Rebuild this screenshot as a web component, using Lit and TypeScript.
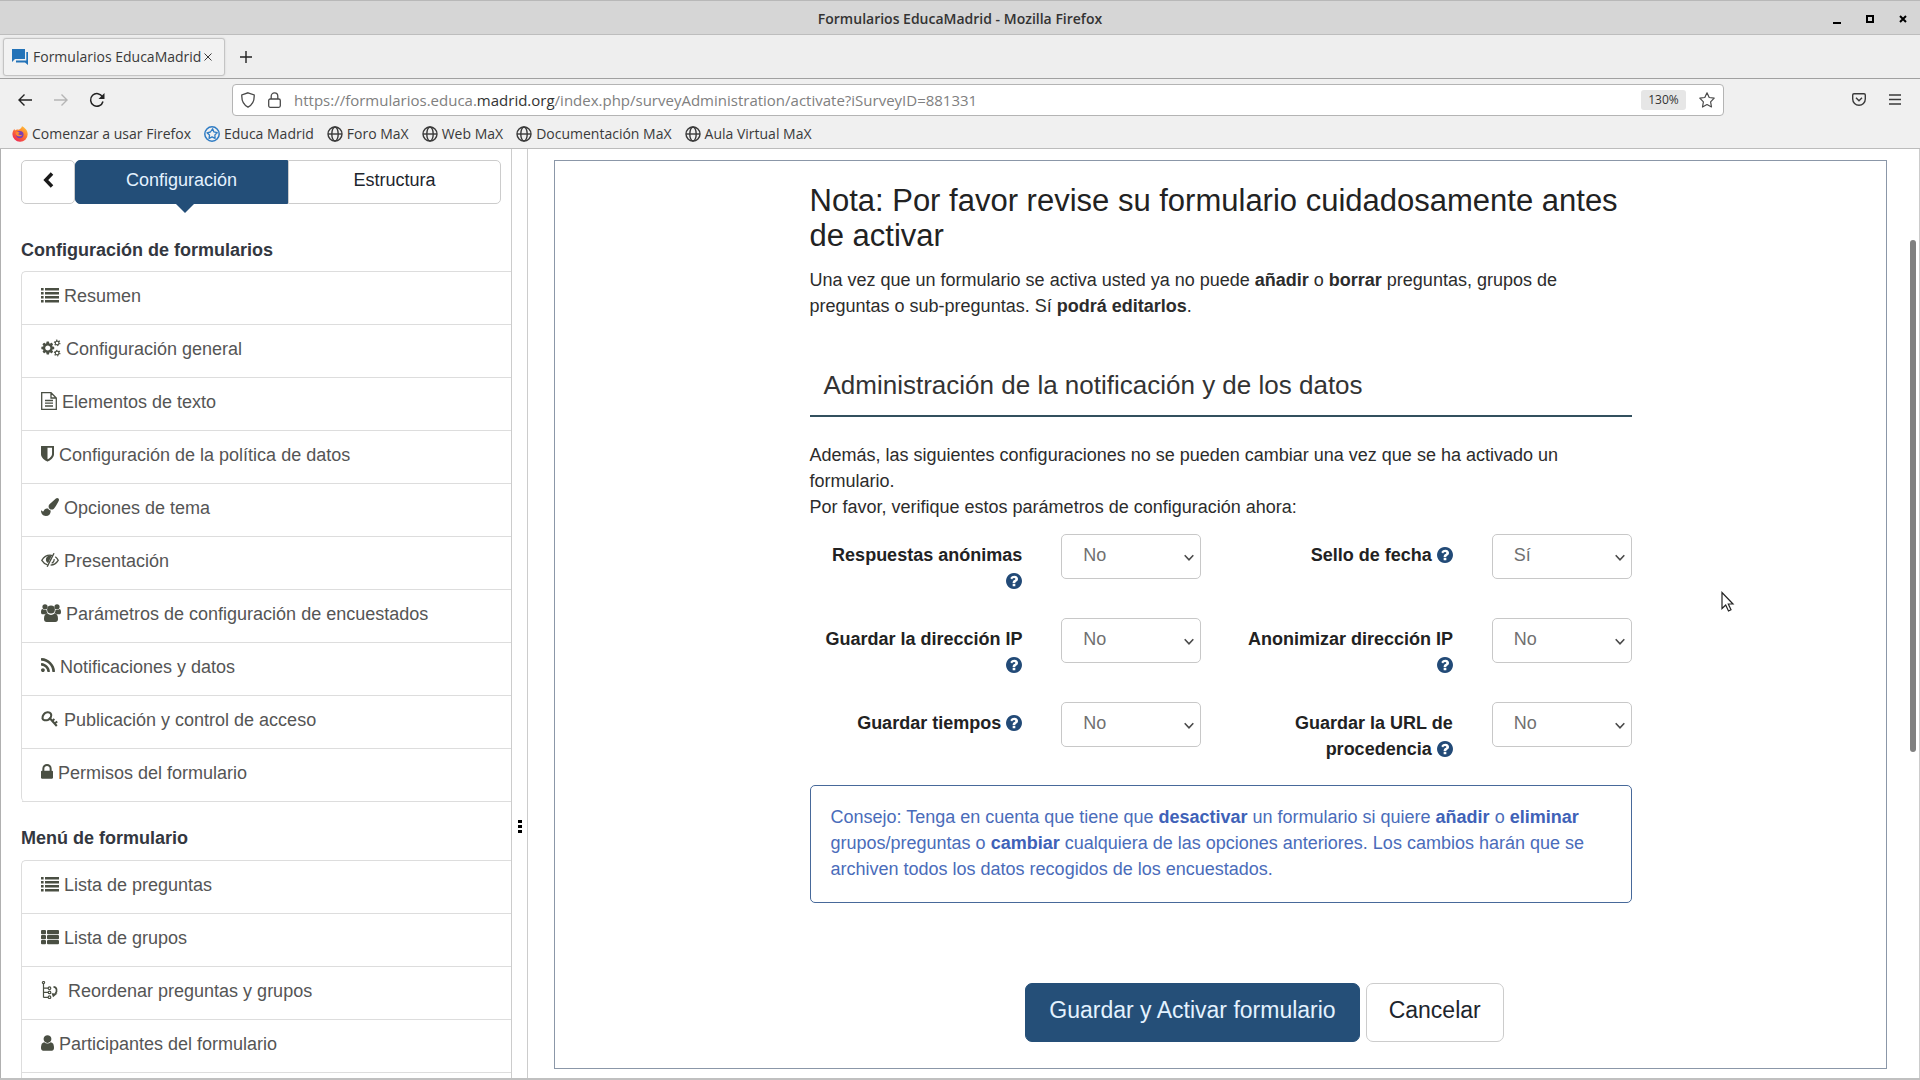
import { LitElement, html, css, svg } from "lit";
import { customElement } from "lit/decorators.js";

const fa = (w: number, box: string, body: unknown) =>
  html`<svg class="ico" width=${w} height="18" viewBox=${box} fill="currentColor" aria-hidden="true">${body}</svg>`;

const icons: Record<string, () => unknown> = {
  list: () => fa(18, "0 0 18 18", svg`<path d="M0 2h2.600v2.600H0zM0 6h2.600v2.600H0zM0 10h2.600v2.600H0zM0 14h2.600v2.600H0zM4 2h14v2.600H4zM4 6h14v2.600H4zM4 10h14v2.600H4zM4 14h14v2.600H4z"/>`),
  groups: () => fa(18, "0 0 18 18", svg`<rect x="0" y="2" width="5" height="4.200" rx="1"/><rect x="0" y="7" width="5" height="4.200" rx="1"/><rect x="0" y="12" width="5" height="4.200" rx="1"/><rect x="6" y="2" width="12" height="4.200" rx="1"/><rect x="6" y="7" width="12" height="4.200" rx="1"/><rect x="6" y="12" width="12" height="4.200" rx="1"/>`),
  cogs: () => fa(20, "0 0 1920 1792", svg`<path fill-rule="evenodd" d="M896 896q0-106-75-181t-181-75-181 75-75 181 75 181 181 75 181-75 75-181zm384-91v185q0 10-7 19.500t-16 10.500l-155 24q-11 35-32 76 34 48 90 115 7 11 7 20 0 12-7 19-23 30-82.500 89.500t-78.500 59.500q-11 0-21-7l-115-90q-37 19-77 31-11 108-23 155-7 24-30 24h-186q-11 0-20-7.500t-10-17.500l-23-153q-34-10-75-31l-118 89q-7 7-20 7-11 0-21-8-144-133-144-160 0-9 7-19 10-14 41-53t47-61q-23-44-35-82l-152-24q-10-1-17-9.500t-7-19.500v-185q0-10 7-19.500t16-10.500l155-24q11-35 32-76-34-48-90-115-7-11-7-20 0-12 7-20 22-30 82-89t79-59q11 0 21 7l115 90q34-18 77-32 11-108 23-154 7-24 30-24h186q11 0 20 7.500t10 17.500l23 153q34 10 75 31l118-89q8-7 20-7 11 0 21 8 144 133 144 160 0 8-7 19-12 16-42 54t-45 60q23 48 34 82l152 23q10 2 17 10.500t7 19.500z"/><g fill="none" stroke="currentColor"><circle cx="1570" cy="390" r="185" stroke-width="120"/><circle cx="1570" cy="390" r="275" stroke-width="110" stroke-dasharray="130 158"/><circle cx="1570" cy="1400" r="185" stroke-width="120"/><circle cx="1570" cy="1400" r="275" stroke-width="110" stroke-dasharray="130 158"/></g>`),
  file: () => fa(16, "0 0 16 18", svg`<path fill="none" stroke="currentColor" stroke-width="1.300" d="M.7.7h9.300l5.300 5.300v11.300H.7zM10 .7V6h5.300M4 8.500h8M4 11.200h8M4 14h8"/>`),
  shield: () => fa(13, "256 64 1280 1728", svg`<path d="M1344 960v-640h-448v1137q119-63 213-137 235-184 235-360zm192-768v768q0 86-33.500 170.500t-83 150-118 127.500-126.500 103-121 77.500-89.500 49.500-42.500 20q-12 6-26 6t-26-6q-16-7-42.500-20t-89.500-49.500-121-77.500-126.500-103-118-127.500-83-150-33.500-170.500v-768q0-26 19-45t45-19h1152q26 0 45 19t19 45z"/>`),
  brush: () => fa(18, "0 0 1792 1792", svg`<path d="M1615 0q70 0 122.500 46.500t52.500 116.500q0 63-45 151-332 629-465 752-97 91-218 91-126 0-216.500-92.500t-90.500-219.500q0-128 92-212l638-579q59-54 130-54zm-909 1034q39 76 106.500 130t150.500 76l1 71q4 213-129.500 347t-348.500 134q-123 0-218-46.500t-152.500-127.500-86.500-183-29-220q7 5 41 30t62 44.500 59 36.500 46 17q41 0 55-37 25-66 57.500-112.500t69.500-76 88-47.500 103-25.500 125-10.500z"/>`),
  eye: () => fa(18, "0 0 18 18", svg`<g fill="none" stroke="currentColor"><path stroke-width="1.300" d="M6.600 13.900C4.200 13.200 2.200 11.600.8 9.300 2.900 5.800 5.600 4.200 9 4.200c.9 0 1.700.1 2.500.4M14.300 5.800c1.200.9 2.200 2 2.900 3.500-1.900 3.100-4.400 4.600-7.600 4.800"/><path stroke-width="1.400" d="M13 2.200 6.200 15.800"/><path stroke-width="1.100" d="M13.200 8c.1 2-.9 3.500-2.500 4.200"/></g><path d="M10.800 4.600 7.200 12C3.900 10.800 4 5.300 8.400 4.400z"/>`),
  users: () => fa(20, "0 0 20 18", svg`<circle cx="4" cy="2.800" r="2.600"/><circle cx="16" cy="2.800" r="2.600"/><circle cx="10" cy="5.500" r="3.900"/><path d="M0 8c0-2 .7-3 1.500-3 1.200 1 2.600 1.300 4 .8C5.400 7.200 5.900 8.300 6.700 9.200 5.400 9.300 4.600 9.700 4 10.300H1.600C.6 10.300 0 9.500 0 8zM20 8c0-2-.7-3-1.500-3-1.200 1-2.600 1.300-4 .8.1 1.400-.4 2.500-1.200 3.400 1.300.1 2.100.5 2.700 1.100h2.400c1 0 1.600-.8 1.600-2.300zM3 15c0-3.500 1.200-5.400 3.400-5.400 2.200 1.700 5 1.700 7.200 0 2.200 0 3.400 1.900 3.400 5.400 0 2-1 3-2.700 3H5.700C4 18 3 17 3 15z"/>`),
  rss: () => fa(14, "192 60 1410 1740", svg`<path d="M576 1344q0 80-56 136t-136 56-136-56-56-136 56-136 136-56 136 56 56 136zm512 123q2 28-17 48-18 21-47 21h-135q-25 0-43-16.500t-20-41.500q-22-229-184.500-391.500t-391.500-184.500q-25-2-41.500-20t-16.500-43v-135q0-29 21-47 17-17 43-17h5q160 13 306 80.500t259 181.500q114 113 181.500 259t80.500 306zm512 2q2 27-18 47-18 20-46 20h-143q-26 0-44.500-17.500t-19.500-42.500q-12-215-101-408.500t-231.500-336-336-231.500-408.500-102q-25-1-42.500-19.500t-17.500-43.500v-143q0-28 20-46 18-18 44-18h3q262 13 501.500 120t425.500 294q187 186 294 425.500t120 501.500z"/>`),
  key: () => fa(18, "0 0 18 18", svg`<g fill="none" stroke="currentColor"><path stroke-width="2.100" d="M2.700 4.400C4.500 1.800 8.400 1.500 9.800 3.600c1.300 2-.2 5.400-3 6.300C4.400 10.600 1.900 10.400 1.500 8.600 1.300 7.200 1.700 5.700 2.700 4.400z"/><path stroke-width="2.100" d="m8.400 7.800 7.400 8.200"/><path stroke-width="1.900" d="m13.600 13.600 2.600-2.200M11 11.200l2.400-2.200"/></g>`),
  lock: () => fa(12, "320 100 1152 1600", svg`<path d="M640 768h512v-192q0-106-75-181t-181-75-181 75-75 181v192zm832 96v576q0 40-28 68t-68 28h-960q-40 0-68-28t-28-68v-576q0-40 28-68t68-28h32v-192q0-184 132-316t316-132 316 132 132 316v192h32q40 0 68 28t28 68z"/>`),
  tree: () => fa(22, "0 0 22 18", svg`<g fill="none" stroke="currentColor" stroke-width="1.200"><circle cx="2.500" cy="1.600" r="1.100"/><path d="M2.500 3v13.400M2.500 7.200h4.600M2.500 11.400h4.600M2.500 16.400h4.600"/><circle cx="8.500" cy="7.200" r="1.300"/><circle cx="8.500" cy="11.400" r="1.300"/><circle cx="8.500" cy="16.200" r="1.300"/></g><path fill="none" stroke="currentColor" stroke-width="1.700" d="M12.500 5.800c3.200.2 4.200 4 1.800 7"/><path d="m10.500 12.200 6 .3-4.500 3.700z"/>`),
  user: () => fa(13, "256 100 1280 1600", svg`<path d="M1536 1399q0 109-62.500 187t-150.500 78h-854q-88 0-150.500-78t-62.500-187q0-85 8.500-160.500t31.500-152 58.500-131 94-89 134.500-34.500q131 128 313 128t313-128q76 0 134.500 34.500t94 89 58.500 131 31.500 152 8.500 160.500zm-256-887q0 159-112.500 271.500t-271.500 112.500-271.500-112.500-112.500-271.500 112.500-271.500 271.500-112.500 271.500 112.500 112.500 271.500z"/>`),
};

const globe = () => html`<svg width="16" height="16" viewBox="0 0 16 16" fill="none" stroke="#3a3a3a" stroke-width="1.400" aria-hidden="true"><circle cx="8" cy="8" r="7"/><ellipse cx="8" cy="8" rx="3.200" ry="7"/><path d="M1 8h14"/></svg>`;
const firefox = () => html`<svg width="16" height="16" viewBox="0 0 16 16" aria-hidden="true"><defs><linearGradient id="ff" x1="1" y1="0" x2="0.300" y2="1"><stop offset="0" stop-color="#ffd23c"/><stop offset=".5" stop-color="#ff7a2e"/><stop offset="1" stop-color="#ee2a55"/></linearGradient></defs><path fill="url(#ff)" d="M10 .3c2.800 1.500 5.700 4 5.700 8A7.600 7.600 0 0 1 8 15.800 7.600 7.600 0 0 1 .4 8.300c0-2.300.9-4 2-5.300l.6 1.500C4 3.600 5.500 3.400 6.500 3.700 8 3.300 9.500 2 10 .3z"/><circle cx="7.800" cy="8.600" r="3.700" fill="#7a3fb5"/><path fill="#ff8a30" d="M3.600 6.400c1.700-1 3.500-.4 4.300.5-1 .1-1.600.6-1.500 1.200.2 1.100 2.600 1.200 4 .3-.5 2.300-5 2.600-6.200.6-.4-.8-.6-1.700-.6-2.600z"/></svg>`;
const educa = () => html`<svg width="16" height="16" viewBox="0 0 16 16" fill="none" stroke="#2f7cc4" aria-hidden="true"><circle cx="8" cy="8" r="7.200" stroke-width="1.500"/><path stroke-width="1.300" stroke-linejoin="round" d="m8.600 2.800 1.300 3.100 3.300.8-2.300 2.200.2 3.500-3-1.500-3 1.500.4-3.300-2.500-2.300 3.400-.8z"/></svg>`;
const help = () => html`<svg class="help" width="16" height="16" viewBox="128 128 1536 1536" fill="#224a77" role="img" aria-label="Ayuda"><circle cx="896" cy="896" r="740" fill="#fff"/><path fill-rule="evenodd" d="M1024 1376v-192q0-14-9-23t-23-9h-192q-14 0-23 9t-9 23v192q0 14 9 23t23 9h192q14 0 23-9t9-23zm256-672q0-88-55.500-163t-138.500-116-170-41q-243 0-371 213-15 24 8 42l132 100q7 6 19 6 16 0 25-12 53-68 86-92 34-24 86-24 48 0 85.500 26t37.500 59q0 38-20 61t-68 45q-63 28-115.500 86.500t-52.500 125.500v36q0 14 9 23t23 9h192q14 0 23-9t9-23q0-19 21.500-49.500t54.500-49.500q32-18 49-28.500t46-35 44.500-48 28-60.500 12.500-81zm384 192q0 209-103 385.500t-279.500 279.500-385.500 103-385.500-103-279.500-279.500-103-385.500 103-385.500 279.500-279.500 385.500-103 385.500 103 279.500 279.500 103 385.500z"/></svg>`;

@customElement("browser-chrome")
class BrowserChrome extends LitElement {
  static styles = css`
    :host { display: block; background: #eee; color: #3a3a3a; font: 14px/20px "Open Sans", "Noto Sans", sans-serif; }
    button { border: 0; padding: 0; background: none; color: inherit; font: inherit; display: flex; align-items: center; justify-content: center; }
    svg { display: block; flex: none; }
    .title { display: grid; grid-template-columns: 1fr auto 1fr; align-items: center; background: #d6d6d6; border-top: 1px solid #b8b8b8; border-bottom: 1px solid #bdbdbd; box-sizing: border-box; height: 35px; padding-top: 2px; }
    .title h1 { grid-column: 2; margin: 0; font-size: 14px; line-height: 20px; font-weight: 600; color: #333; }
    .win { display: flex; justify-content: flex-end; gap: 18px; padding-right: 10px; color: #000; }
    .win button { width: 15px; height: 16px; }
    .tabs { display: flex; align-items: center; height: 43px; border-bottom: 1px solid #a0a0a0; padding-left: 3px; gap: 11px; }
    .tab { display: flex; align-items: center; box-sizing: border-box; width: 222px; height: 38px; padding: 1px 12px 0 8px; border: 1px solid #c4c4c4; border-radius: 3px; background: #f2f2f2; box-shadow: 0 0 2px #ccc; }
    .tab span { margin-left: 5px; flex: 1; white-space: nowrap; }
    .plus { width: 20px; height: 20px; }
    .nav { display: flex; align-items: center; height: 41px; padding: 0 19px 0 15px; background: #f0f0f0; }
    .nav .b { width: 20px; height: 20px; margin-right: 16px; }
    .url { flex: 1; display: flex; align-items: center; box-sizing: border-box; height: 32px; margin: 0 128px 0 109px; padding: 0 8px; border: 1px solid #b4b4b4; border-radius: 4px; background: #fff; gap: 13px; color: #808080; }
    .addr { flex: 1; font-size: 15px; }
    .addr b { font-weight: 400; color: #333; }
    .zoom { width: 45px; height: 20px; background: #e6e6e6; border-radius: 3px; font-size: 12px; color: #333; }
    .menu { display: flex; gap: 23px; }
    .marks { display: flex; align-items: center; height: 29px; box-sizing: border-box; padding: 0 0 1px 12px; gap: 13px; border-bottom: 1px solid #bcbcbc; background: #f0f0f0; }
    .marks a { display: flex; align-items: center; gap: 4px; color: inherit; text-decoration: none; }
  `;
  render() {
    return html`
      <header class="title">
        <h1>Formularios EducaMadrid - Mozilla Firefox</h1>
        <div class="win">
          <button aria-label="Minimizar"><svg width="8" height="10"><path d="M0 8h8v2H0z"/></svg></button>
          <button aria-label="Maximizar"><svg width="8" height="8" fill="none" stroke="#000" stroke-width="2"><path d="M1 1h6v6H1z"/></svg></button>
          <button aria-label="Cerrar"><svg width="8" height="8" stroke="#000" stroke-width="2"><path d="m1 1 6 6M7 1 1 7"/></svg></button>
        </div>
      </header>
      <div class="tabs">
        <div class="tab">
          <svg width="16" height="16" viewBox="0 0 16 16" fill="#2373b8"><path d="M0 0h13v10H3l-3 3zM14.300 3H16v13l-3-2.500H4v-2h10.300z"/></svg>
          <span>Formularios EducaMadrid</span>
          <button aria-label="Cerrar pestaña"><svg width="8" height="8" stroke="#3a3a3a"><path d="m.5.5 7 7M7.500.5l-7 7"/></svg></button>
        </div>
        <button class="plus" aria-label="Nueva pestaña"><svg width="12" height="12" stroke="#222" stroke-width="1.400"><path d="M6 0v12M0 6h12"/></svg></button>
      </div>
      <nav class="nav">
        <button class="b" aria-label="Atrás"><svg width="14" height="12" fill="none" stroke="#222" stroke-width="1.400"><path d="M14 6H1M6.500.5 1 6l5.500 5.500"/></svg></button>
        <button class="b" aria-label="Adelante"><svg width="14" height="12" fill="none" stroke="#b5b5b5" stroke-width="1.400"><path d="M0 6h13M7.500.5 13 6l-5.500 5.500"/></svg></button>
        <button class="b" aria-label="Recargar"><svg width="16" height="16" fill="none" stroke="#222" stroke-width="1.500"><path d="M13.500 5A6.300 6.300 0 1 0 14 9.500"/><path fill="#222" stroke="none" d="M15.500 1v6h-6z"/></svg></button>
        <div class="url">
          <svg width="14" height="16" fill="none" stroke="#4a4a4a" stroke-width="1.300"><path d="M7 .8 13.200 3c.3 6-1.700 10-6.200 12.200C2.500 13 .5 9 .8 3z"/></svg>
          <svg width="13" height="16" fill="none" stroke="#4a4a4a" stroke-width="1.300"><rect x=".7" y="7" width="11.600" height="8.300" rx="1.500"/><path d="M3.200 7V4.200a3.300 3.300 0 0 1 6.600 0V7"/></svg>
          <span class="addr">https://formularios.educa.<b>madrid.org</b>/index.php/surveyAdministration/activate?iSurveyID=881331</span>
          <button class="zoom">130%</button>
          <button aria-label="Añadir a marcadores"><svg width="16" height="16" fill="none" stroke="#4a4a4a" stroke-width="1.200" stroke-linejoin="round"><path d="m8 .8 2.200 4.700 5 .7-3.600 3.600.9 5.200L8 12.500 3.500 15l.9-5.200L.8 6.200l5-.7z"/></svg></button>
        </div>
        <div class="menu">
          <button aria-label="Pocket"><svg width="14" height="13" fill="none" stroke="#3a3a3a" stroke-width="1.400"><path d="M2 .7h10q1.300 0 1.300 1.300v4a6.300 6.300 0 0 1-12.600 0V2Q.7.7 2 .7zM4 4.700l3 3 3-3"/></svg></button>
          <button aria-label="Menú"><svg width="12" height="11" stroke="#3a3a3a" stroke-width="1.300"><path d="M0 1h12M0 5.500h12M0 10h12"/></svg></button>
        </div>
      </nav>
      <nav class="marks">
        <a href="#">${firefox()}Comenzar a usar Firefox</a>
        <a href="#">${educa()}Educa Madrid</a>
        ${["Foro MaX", "Web MaX", "Documentación MaX", "Aula Virtual MaX"].map((t) => html`<a href="#">${globe()}${t}</a>`)}
      </nav>`;
  }
}

@customElement("side-menu")
class SideMenu extends LitElement {
  static styles = css`
    :host { display: flex; flex-direction: column; min-height: 0; overflow: hidden; box-sizing: border-box; padding: 11px 0 0 20px; border-left: 1px solid #b0b0b0; }
    .switch { display: flex; flex: none; height: 44px; margin-right: 10px; }
    .switch button { box-sizing: border-box; font: 18px/26px "Liberation Sans", sans-serif; border: 1px solid #ccc; background: #fff; color: #1d252d; padding: 0 0 4px; }
    .back { width: 54px; border-radius: 5px; display: flex; align-items: center; justify-content: center; }
    .switch .on { flex: 1; position: relative; background: #234e78; border-color: #234e78; color: #e3f2ff; border-radius: 5px 0 0 5px; }
    .on::after { content: ""; position: absolute; left: calc(50% - 7px); top: 100%; border: 10px solid transparent; border-top-color: #234e78; border-bottom: 0; }
    .off { flex: 1; border-left: 0; border-radius: 0 5px 5px 0; }
    h2 { flex: none; margin: 0; font-size: 18px; line-height: 26px; font-weight: 700; color: #333740; padding: 33px 0 8px; }
    h2 + ul ~ h2 { padding: 23px 0 9px; }
    ul { flex: none; list-style: none; margin: 0; padding: 0; border: 1px solid #ddd; border-width: 1px 0 0 1px; border-radius: 5px 0 0 5px; }
    ul:last-child { flex: 1 0 auto; border-bottom-left-radius: 0; }
    li { border-bottom: 1px solid #ddd; }
    a { display: flex; align-items: center; gap: 5px; padding: 11px 0 15px 19px; color: #555; text-decoration: none; font-size: 18px; line-height: 26px; }
    svg.ico { flex: none; color: #4a4f43; display: block; margin-bottom: 2px; }
  `;
  top: [string, string][] = [
    ["list", "Resumen"], ["cogs", "Configuración general"], ["file", "Elementos de texto"],
    ["shield", "Configuración de la política de datos"], ["brush", "Opciones de tema"], ["eye", "Presentación"],
    ["users", "Parámetros de configuración de encuestados"], ["rss", "Notificaciones y datos"],
    ["key", "Publicación y control de acceso"], ["lock", "Permisos del formulario"],
  ];
  bottom: [string, string][] = [
    ["list", "Lista de preguntas"], ["groups", "Lista de grupos"],
    ["tree", "Reordenar preguntas y grupos"], ["user", "Participantes del formulario"],
  ];
  rows(items: [string, string][]) {
    return html`<ul>${items.map(([i, t]) => html`<li><a href="#">${icons[i]()}<span>${t}</span></a></li>`)}</ul>`;
  }
  render() {
    return html`
      <div class="switch">
        <button class="back" aria-label="Volver"><svg width="11" height="16" fill="none" stroke="#1a1a1a" stroke-width="3.500"><path d="M9 1.500 2.800 8 9 14.500"/></svg></button>
        <button class="on">Configuración</button>
        <button class="off">Estructura</button>
      </div>
      <h2>Configuración de formularios</h2>
      ${this.rows(this.top)}
      <h2>Menú de formulario</h2>
      ${this.rows(this.bottom)}`;
  }
}

@customElement("activate-panel")
class ActivatePanel extends LitElement {
  static styles = css`
    :host { display: block; box-sizing: border-box; padding: 22px 19px 0; border: 1px solid #8b97a8; color: #2c2c2c; font-size: 18px; line-height: 26px; }
    .col { box-sizing: border-box; width: 66.667%; margin: 0 auto; padding: 0 20px; }
    h2 { margin: 0 0 14px; font-size: 31px; line-height: 35px; font-weight: 400; color: #222; }
    h3 { margin: 48px 0 0; padding: 0 14px 12px; font-size: 26px; line-height: 36px; font-weight: 400; color: #333; border-bottom: 2px solid #33505e; }
    p { margin: 0; }
    .note { margin-top: 25px; }
    .grid { display: grid; grid-template-columns: 213fr 140fr 213fr 140fr; column-gap: 39px; row-gap: 24px; margin-top: 14px; }
    label { min-height: 52px; padding: 8px 0 0 5px; text-align: right; font-weight: 700; color: #222; }
    .help { vertical-align: -2px; }
    .pick { position: relative; }
    select { appearance: none; box-sizing: border-box; width: 100%; height: 45px; margin: 0; padding: 0 20px 4px 21px; border: 1px solid #c8c8c8; border-radius: 5px; background: #fff; color: #707070; font: 18px/26px "Liberation Sans", sans-serif; opacity: 1; }
    .pick svg { position: absolute; right: 7px; top: 20px; pointer-events: none; }
    .tip { margin-top: 23px; padding: 18px 20px 20px; border: 1px solid #47699a; border-radius: 5px; color: #4a6cba; }
    .tip b { color: #3f62b8; }
    .actions { display: flex; justify-content: center; gap: 6px; padding: 80px 0 26px 88px; }
    .actions button { box-sizing: border-box; height: 59px; padding: 0 22px 5px; border: 1px solid #ccc; border-radius: 7px; background: #fff; color: #1d252d; font: 23px/32px "Liberation Sans", sans-serif; }
    .actions .go { padding: 0 23px 5px; background: #254f78; border-color: #254f78; color: #e3f2ff; }
  `;
  fields: [string, string][] = [
    ["Respuestas anónimas", "No"], ["Sello de fecha", "Sí"], ["Guardar la dirección IP", "No"],
    ["Anonimizar dirección IP", "No"], ["Guardar tiempos", "No"], ["Guardar la URL de procedencia", "No"],
  ];
  render() {
    return html`
      <div class="col">
        <h2>Nota: Por favor revise su formulario cuidadosamente antes de activar</h2>
        <p>Una vez que un formulario se activa usted ya no puede <b>añadir</b> o <b>borrar</b> preguntas, grupos de preguntas o sub-preguntas. Sí <b>podrá editarlos</b>.</p>
        <h3>Administración de la notificación y de los datos</h3>
        <p class="note">Además, las siguientes configuraciones no se pueden cambiar una vez que se ha activado un formulario.<br>Por favor, verifique estos parámetros de configuración ahora:</p>
        <div class="grid">
          ${this.fields.map(([t, v], i) => html`
            <label for="f${i}">${t} ${help()}</label>
            <div class="pick">
              <select id="f${i}"><option ?selected=${v === "Sí"}>Sí</option><option ?selected=${v === "No"}>No</option></select>
              <svg width="10" height="8" fill="none" stroke="#4a4a4a" stroke-width="1.600"><path d="m.7 1.300 4.300 4.500 4.300-4.500"/></svg>
            </div>`)}
        </div>
        <div class="tip">Consejo: Tenga en cuenta que tiene que <b>desactivar</b> un formulario si quiere <b>añadir</b> o <b>eliminar</b> grupos/preguntas o <b>cambiar</b> cualquiera de las opciones anteriores. Los cambios harán que se archiven todos los datos recogidos de los encuestados.</div>
        <div class="actions"><button class="go">Guardar y Activar formulario</button><button>Cancelar</button></div>
      </div>`;
  }
}

@customElement("app-root")
class AppRoot extends LitElement {
  static styles = css`
    :host { display: flex; flex-direction: column; box-sizing: border-box; height: 100vh; overflow: hidden; background: #fff; border-bottom: 2px solid #c0c0c0; font-family: "Liberation Sans", Arial, sans-serif; }
    browser-chrome { flex: none; }
    main { position: relative; flex: 1; min-height: 0; display: grid; grid-template-columns: 511px 17px 1fr 33px; }
    .split { border: 1px solid #ccc; border-width: 0 1px; display: flex; justify-content: center; padding-top: 671px; }
    .split svg { flex: none; height: 13px; }
    .view { padding: 11px 0 10px 26px; min-height: 0; }
    .scroll { border-right: 1px solid #ccc; display: flex; justify-content: flex-end; padding: 91px 3px 0 0; }
    .thumb { width: 6px; height: 512px; border-radius: 3px; background: #808080; }
    .pointer { position: absolute; left: 1721px; top: 442px; }
  `;
  render() {
    return html`
      <browser-chrome></browser-chrome>
      <main>
        <side-menu></side-menu>
        <div class="split"><svg width="4" height="13" fill="#000"><path d="M0 0h4v3H0zM0 5h4v3H0zM0 10h4v3H0z"/></svg></div>
        <div class="view"><activate-panel></activate-panel></div>
        <div class="scroll"><div class="thumb"></div></div>
        <svg class="pointer" width="14" height="21" fill="#fff" stroke="#222" stroke-width="1.200"><path d="M1 1.500v16l3.700-3.500 2.800 6 2.500-1.200L7.300 13H12z"/></svg>
      </main>`;
  }
}
